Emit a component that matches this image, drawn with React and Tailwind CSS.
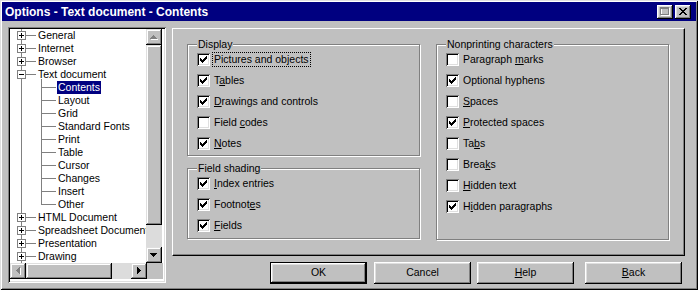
const raised =
  'shadow-[inset_-1px_-1px_0_#000,inset_1px_1px_0_#fff,inset_-2px_-2px_0_#808080,inset_2px_2px_0_#dfdfdf]'
const scrollBtn =
  'shadow-[inset_-1px_-1px_0_#000,inset_1px_1px_0_#dfdfdf,inset_-2px_-2px_0_#808080,inset_2px_2px_0_#fff]'
const sunken =
  'shadow-[inset_1px_1px_0_#808080,inset_-1px_-1px_0_#fff,inset_2px_2px_0_#000,inset_-2px_-2px_0_#dfdfdf]'

function Label({ text, u }) {
  if (u == null) return <>{text}</>
  return (
    <>
      {text.slice(0, u)}
      <u className="underline-offset-[1px]">{text[u]}</u>
      {text.slice(u + 1)}
    </>
  )
}

function CheckBox({ label, u, checked, focus }) {
  return (
    <div className="flex h-[21px] items-center">
      <span className={`relative h-[13px] w-[13px] shrink-0 bg-white ${sunken}`}>
        {checked ? (
          <svg className="absolute left-[3px] top-[3px]" width="7" height="7" shapeRendering="crispEdges">
            {[2, 3, 4, 3, 2, 1, 0].map((y, i) => (
              <rect key={i} x={i} y={y} width="1" height="3" fill="#000" />
            ))}
          </svg>
        ) : null}
      </span>
      <span
        className={`ml-[3px] px-[1px] leading-[13px] ${focus ? 'outline outline-1 outline-dotted outline-black' : ''}`}
      >
        <Label text={label} u={u} />
      </span>
    </div>
  )
}

function Group({ title, height, children }) {
  return (
    <div
      className={`relative border border-[#808080] shadow-[inset_1px_1px_0_#fff,1px_1px_0_#fff] pl-[9px] pt-[4px] ${height}`}
    >
      <span className="absolute -top-[7px] left-[9px] bg-[#c0c0c0] px-[1px] leading-[13px]">{title}</span>
      {children}
    </div>
  )
}

function Expander({ open }) {
  return (
    <svg className="absolute left-[7px] top-[2px]" width="9" height="9" shapeRendering="crispEdges">
      <rect x="0.5" y="0.5" width="8" height="8" fill="#fff" stroke="#808080" />
      <rect x="2" y="4" width="5" height="1" fill="#000" />
      {open ? null : <rect x="4" y="2" width="1" height="5" fill="#000" />}
    </svg>
  )
}

const tree = [
  { label: 'General', top: true },
  { label: 'Internet', top: true },
  { label: 'Browser', top: true },
  { label: 'Text document', top: true, open: true },
  { label: 'Contents', selected: true },
  { label: 'Layout' },
  { label: 'Grid' },
  { label: 'Standard Fonts' },
  { label: 'Print' },
  { label: 'Table' },
  { label: 'Cursor' },
  { label: 'Changes' },
  { label: 'Insert' },
  { label: 'Other', last: true },
  { label: 'HTML Document', top: true },
  { label: 'Spreadsheet Document', top: true },
  { label: 'Presentation', top: true },
  { label: 'Drawing', top: true },
]

function TreeRow({ item }) {
  return (
    <div className="relative flex h-[13px] shrink-0 items-center whitespace-nowrap">
      <span className="absolute left-[11px] top-0 h-[13px] w-px bg-[#808080]" />
      {item.top ? (
        <>
          <span className="absolute left-[16px] top-[6px] h-px w-[10px] bg-[#808080]" />
          <Expander open={item.open} />
          {item.open ? <span className="absolute left-[31px] top-[11px] h-[2px] w-px bg-[#808080]" /> : null}
        </>
      ) : (
        <>
          <span
            className={`absolute left-[31px] top-0 w-px bg-[#808080] ${item.last ? 'h-[7px]' : 'h-[13px]'}`}
          />
          <span className="absolute left-[31px] top-[6px] h-px w-[15px] bg-[#808080]" />
        </>
      )}
      <span
        className={`px-[1px] leading-[13px] ${item.top ? 'ml-[27px]' : 'ml-[47px]'} ${
          item.selected ? 'bg-[#000080] text-white' : ''
        }`}
      >
        {item.label}
      </span>
    </div>
  )
}

function Arrow({ dir, disabled }) {
  const shapes = {
    up: [[3, 0, 1], [2, 1, 3], [1, 2, 5], [0, 3, 7]],
    down: [[0, 0, 7], [1, 1, 5], [2, 2, 3], [3, 3, 1]],
  }
  const horiz = dir === 'left' || dir === 'right'
  const rows = horiz ? (dir === 'right' ? shapes.down : shapes.up) : shapes[dir]
  const color = disabled ? '#808080' : '#000'
  return (
    <svg
      width={horiz ? 5 : 8}
      height={horiz ? 8 : 5}
      shapeRendering="crispEdges"
      className={horiz ? '' : ''}
    >
      {rows.map(([o, i, w], k) =>
        horiz ? (
          <g key={k}>
            {disabled ? <rect x={i + 1} y={o + 1} width="1" height={w} fill="#fff" /> : null}
            <rect x={i} y={o} width="1" height={w} fill={color} />
          </g>
        ) : (
          <g key={k}>
            {disabled ? <rect x={o + 1} y={i + 1} width={w} height="1" fill="#fff" /> : null}
            <rect x={o} y={i} width={w} height="1" fill={color} />
          </g>
        )
      )}
    </svg>
  )
}

function ScrollButton({ dir, disabled }) {
  return (
    <div className={`flex h-[16px] w-[16px] shrink-0 items-center justify-center bg-[#c0c0c0] ${scrollBtn}`}>
      <Arrow dir={dir} disabled={disabled} />
    </div>
  )
}

function TitleButtons() {
  return (
    <div className="flex gap-[2px] pr-[5px]">
      <div className={`flex h-[14px] w-[16px] items-center justify-center bg-[#c0c0c0] ${raised}`}>
        <svg width="10" height="9" shapeRendering="crispEdges">
          <rect x="1.5" y="1.5" width="8" height="7" fill="none" stroke="#fff" />
          <rect x="0.5" y="0.5" width="8" height="7" fill="none" stroke="#808080" />
          <rect x="0" y="0" width="9" height="2" fill="#808080" />
        </svg>
      </div>
      <div className={`flex h-[14px] w-[16px] items-center justify-center bg-[#c0c0c0] ${raised}`}>
        <svg width="8" height="7" shapeRendering="crispEdges">
          {[0, 1, 2, 3, 4, 5, 6].map((i) => (
            <g key={i}>
              <rect x={i} y={i} width="2" height="1" fill="#000" />
              <rect x={6 - i} y={i} width="2" height="1" fill="#000" />
            </g>
          ))}
        </svg>
      </div>
    </div>
  )
}

function PushButton({ label, u, isDefault, className }) {
  return (
    <div
      className={`flex h-[22px] w-[97px] items-center justify-center bg-[#c0c0c0] ${
        isDefault
          ? 'shadow-[inset_0_0_0_1px_#000,inset_-2px_-2px_0_#000,inset_2px_2px_0_#fff,inset_-3px_-3px_0_#808080,inset_3px_3px_0_#dfdfdf]'
          : raised
      } ${className || ''}`}
    >
      <Label text={label} u={u} />
    </div>
  )
}

export default function App() {
  return (
    <div className="h-[290px] w-[698px] overflow-hidden bg-[#c0c0c0] font-['Liberation_Sans',Arial,sans-serif] text-[10.5px] text-black shadow-[inset_1px_1px_0_#dfdfdf,inset_-1px_-1px_0_#000,inset_2px_2px_0_#fff,inset_-2px_-2px_0_#808080] p-[2px]">
      <div className="flex h-[19px] items-center justify-between bg-[#000080] pl-[3px]">
        <span className="text-[12px] font-bold text-white">Options - Text document - Contents</span>
        <TitleButtons />
      </div>

      <div className="flex pl-[6px]">
        <div className={`mt-[6px] flex h-[256px] w-[158px] flex-col bg-white p-[2px] ${sunken}`}>
          <div className="flex h-[234px]">
            <div className="flex w-[136px] flex-col overflow-hidden">
              {tree.map((item) => (
                <TreeRow key={item.label} item={item} />
              ))}
            </div>
            <div className="flex w-[16px] flex-col">
              <ScrollButton dir="up" disabled />
              <div className={`h-[180px] bg-[#c0c0c0] ${scrollBtn}`} />
              <div className="h-[22px] bg-[#dcdcdc]" />
              <ScrollButton dir="down" />
            </div>
          </div>
          <div className="flex h-[16px]">
            <ScrollButton dir="left" disabled />
            <div className={`w-[86px] bg-[#c0c0c0] ${scrollBtn}`} />
            <div className="w-[19px] bg-[#dcdcdc]" />
            <ScrollButton dir="right" />
            <div className="w-[16px] bg-[#c0c0c0]" />
          </div>
        </div>

        <div className="ml-[6px] mt-[7px] flex flex-col">
          <div className="flex h-[228px] w-[513px] gap-[16px] border border-b-black border-l-white border-r-black border-t-white pl-[14px] pt-[15px] shadow-[inset_-1px_-1px_0_#808080]">
            <div className="flex w-[233px] flex-col gap-[12px]">
              <Group title="Display" height="h-[112px]">
                <CheckBox label="Pictures and objects" checked focus />
                <CheckBox label="Tables" u={1} checked />
                <CheckBox label="Drawings and controls" u={0} checked />
                <CheckBox label="Field codes" u={6} />
                <CheckBox label="Notes" u={0} checked />
              </Group>
              <Group title="Field shading" height="h-[71px]">
                <CheckBox label="Index entries" u={0} checked />
                <CheckBox label="Footnotes" u={7} checked />
                <CheckBox label="Fields" u={0} checked />
              </Group>
            </div>
            <div className="w-[233px]">
              <Group title="Nonprinting characters" height="h-[196px]">
                <CheckBox label="Paragraph marks" u={10} />
                <CheckBox label="Optional hyphens" checked />
                <CheckBox label="Spaces" u={0} />
                <CheckBox label="Protected spaces" u={0} checked />
                <CheckBox label="Tabs" u={2} />
                <CheckBox label="Breaks" u={4} />
                <CheckBox label="Hidden text" u={0} />
                <CheckBox label="Hidden paragraphs" u={1} checked />
              </Group>
            </div>
          </div>

          <div className="mt-[6px] flex pl-[98px]">
            <PushButton label="OK" isDefault />
            <PushButton label="Cancel" className="ml-[7px]" />
            <PushButton label="Help" u={0} className="ml-[6px]" />
            <PushButton label="Back" u={0} className="ml-[11px]" />
          </div>
        </div>
      </div>
    </div>
  )
}
